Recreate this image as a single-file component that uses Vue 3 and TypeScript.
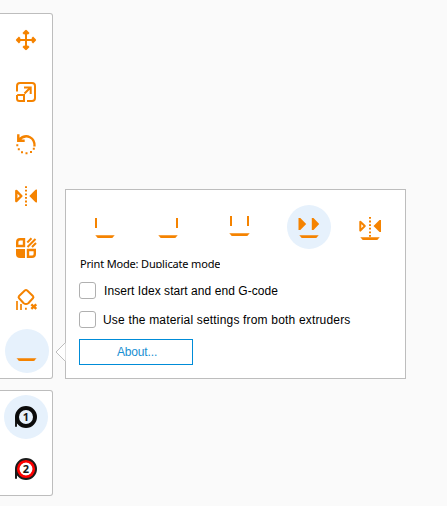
<script setup lang="ts">
import { ref } from 'vue'

const selectedTool = ref('idex')
const selectedExtruder = ref(1)
const selectedMode = ref('duplicate')
const insertGcode = ref(false)
const bothMaterials = ref(false)

const tools = ['move', 'scale', 'rotate', 'mirror', 'settings', 'support', 'idex']
const modes = ['left', 'right', 'dual', 'duplicate', 'mirror']
const extruders = [1, 2]
</script>

<template>
  <main class="viewport">
    <aside class="rail">
      <nav class="panel tools">
        <button v-for="tool in tools" :key="tool" class="cell" :class="[tool, { active: tool === selectedTool }]" @click="selectedTool = tool">
          <svg viewBox="0 0 44 44">
            <template v-if="tool === 'move'">
              <path class="line" d="M22 13.5V30.5M13.5 22H30.5" />
              <path class="line thick" stroke-linejoin="round" d="M19.3 15.8 22 13.1 24.7 15.8M19.3 28.2 22 30.9 24.7 28.2M15.8 19.3 13.1 22 15.8 24.7M28.2 19.3 30.9 22 28.2 24.7" />
            </template>
            <template v-else-if="tool === 'scale'">
              <path class="line" d="M13 21.5V16Q13 13 16 13H28Q31 13 31 16V28Q31 31 28 31H23" />
              <path class="line" d="M13.2 25H20V31H15.5Q13 31 13 28.5V25M20.5 23.5 26.5 17.5M20 17.5H26.7V24" />
            </template>
            <template v-else-if="tool === 'rotate'">
              <path class="line thick" d="M14.5 18.3C18 14.6 22 13.2 26 15.2C29.5 17 30.8 20.2 30.5 24.5" />
              <path class="line thick" d="M14.3 12.2V18.8H20.7" />
              <path class="fill" d="M13.5 14 20 19.5H13.5Z" />
              <path class="dot" d="M12.3 22.3h2v2h-2zM13.8 26.3h2v2h-2zM17 29.2h2v2h-2zM21.5 30.3h2v2h-2zM26 29h2v2h-2zM28.8 25.8h2v2h-2z" />
            </template>
            <template v-else-if="tool === 'mirror'">
              <path class="line thick" stroke-linejoin="round" d="M12.3 16.9 17.4 22 12.3 27.1Z" />
              <path class="fill" d="M33 15.5V28.5L31.5 28.2 25.3 22 31.5 15.8Z" />
              <path class="dash" d="M22 12.2V32" />
            </template>
            <template v-else-if="tool === 'settings'">
              <path class="line thick" d="M20 20V13.2H16Q13.2 13.2 13.2 16V20ZM24 24V30.8H28Q30.8 30.8 30.8 28V24Z" />
              <path class="fill" d="M12 23H21V32H16Q12 32 12 28Z" />
              <path class="line" d="M23.3 16.5 27.5 12.3M23.5 21 31.5 13M28 21 32 17" />
            </template>
            <template v-else-if="tool === 'support'">
              <path class="line" stroke-linejoin="round" d="M20.8 12.5Q22 11.5 23.2 12.5L28.9 17.9Q30 19.1 28.9 20.3L24.3 25.2Q22 26.8 19.7 25.2L15.1 20.3Q14 19.1 15.1 17.9Z" />
              <path class="line thin" d="M13 23V32M17 26V32" />
              <path class="dot" d="M21 29.7h1.8v2h-1.8z" />
              <path class="line thick" d="M27.3 26.3 32.3 30.9M32.3 26.3 27.3 30.9" />
            </template>
            <path v-else class="base" d="M11.3 29.3H31.8Q30.8 29.5 30.2 30.7 29.6 32 28.3 32H14.8Q13.5 32 12.9 30.7 12.3 29.5 11.3 29.3Z" />
          </svg>
        </button>
      </nav>
      <nav class="panel extruders">
        <button v-for="number in extruders" :key="number" class="cell" :class="{ active: number === selectedExtruder }" @click="selectedExtruder = number">
          <svg viewBox="0 0 44 44">
            <path d="M11 21V31.7H13V28.5H17Z" fill="#1b1b1b" />
            <circle cx="22" cy="22" r="9" :class="number === 1 ? 'rim-black' : 'rim-red'" />
            <circle v-if="number === 2" cx="22" cy="22" r="7.8" class="spool-red" />
            <text x="22" y="25.8" text-anchor="middle">{{ number }}</text>
          </svg>
        </button>
      </nav>
    </aside>

    <section class="popup">
      <svg class="pointer" viewBox="0 0 11 20"><path d="M10.5 0V.5L1 10L10.5 19.5V20" /></svg>
      <div class="modes">
        <button v-for="mode in modes" :key="mode" class="cell" :class="{ active: mode === selectedMode }" @click="selectedMode = mode">
          <svg viewBox="0 0 44 44">
            <path v-if="mode === 'left'" class="fill" d="M12 13H14V23H12Z" />
            <path v-else-if="mode === 'right'" class="fill" d="M30 13H32V23H30Z" />
            <path v-else-if="mode === 'dual'" class="fill" d="M13 11H15V21H13ZM30 11H32V21H30Z" />
            <path v-else-if="mode === 'duplicate'" class="fill" d="M11.5 13 13.3 13 19.2 19 13.3 25H11.5ZM24.8 13H26.5L32.2 19 26.5 25H24.8Z" />
            <template v-else>
              <path class="line" stroke-linejoin="round" d="M12.3 16.7 16.8 21 12.3 25.6Z" />
              <path class="fill" d="M33 15V27H31.5L25.5 21 31.5 15Z" />
              <path class="dash" d="M22 12V31.8" />
            </template>
            <path v-if="mode === 'dual'" class="base" d="M12 28.3H33Q32 28.5 31.4 29.7 30.8 31 29.5 31H15.5Q14.2 31 13.6 29.7 13 28.5 12 28.3Z" />
            <path v-else-if="mode === 'mirror'" class="base" d="M12 32.3H32Q31 32.5 30.4 33.7 29.8 35 28.5 35H15.5Q14.2 35 13.6 33.7 13 32.5 12 32.3Z" />
            <path v-else class="base" d="M12 30.3H32Q31 30.5 30.4 31.7 29.8 33 28.5 33H15.5Q14.2 33 13.6 31.7 13 30.5 12 30.3Z" />
          </svg>
        </button>
      </div>
      <h1>Print Mode: Duplicate mode</h1>
      <label class="gcode"><input v-model="insertGcode" type="checkbox"><span>Insert Idex start and end G-code</span></label>
      <label class="materials"><input v-model="bothMaterials" type="checkbox"><span>Use the material settings from both extruders</span></label>
      <button class="about">About...</button>
    </section>
  </main>
</template>

<style>
body {
  background: #fafafa;
}
</style>

<style scoped>
* {
  box-sizing: border-box;
}
.viewport {
  display: flex;
  align-items: flex-start;
  width: 447px;
  height: 506px;
  overflow: hidden;
  background: #fafafa;
  font-family: "Liberation Sans", Arial, sans-serif;
}
button {
  margin: 0;
  padding: 0;
  border: 0;
  background: transparent;
}
.rail {
  width: 53px;
  padding-top: 13px;
}
.panel {
  display: flex;
  flex-direction: column;
  gap: 8px;
  padding: 4px;
  background: #fff;
  border: 1px solid #bdbdbd;
  border-left: 0;
  border-radius: 0 3px 3px 0;
}
.tools {
  height: 366px;
}
.extruders {
  height: 106px;
  margin-top: 11px;
}
.cell {
  display: block;
  flex: none;
  width: 44px;
  height: 44px;
  border-radius: 50%;
}
.cell.active {
  background: #e6f1fc;
}
.cell.idex {
  margin: -1px 0 0 1px;
}
svg {
  display: block;
  width: 44px;
  height: 44px;
}
.fill,
.base,
.dot {
  fill: #f58300;
}
.line {
  fill: none;
  stroke: #f58300;
  stroke-width: 2;
}
.line.thick {
  stroke-width: 2.4;
}
.line.thin {
  stroke-width: 1.7;
}
.dash {
  fill: none;
  stroke: #f58300;
  stroke-width: 2;
  stroke-dasharray: 1.8 1.8;
}
text {
  font: bold 11px "Noto Sans", sans-serif;
  fill: #171717;
}
.rim-black {
  fill: #e6f1fc;
  stroke: #0b0b0b;
  stroke-width: 4;
}
.rim-red {
  fill: #fff;
  stroke: #1b1b1b;
  stroke-width: 4;
}
.spool-red {
  fill: none;
  stroke: #f00;
  stroke-width: 2.6;
}
.popup {
  position: relative;
  display: flex;
  flex-direction: column;
  align-items: flex-start;
  width: 341px;
  height: 190px;
  margin: 189px 0 0 12px;
  padding: 15px 13px 0;
  background: #fff;
  border: 1px solid #bdbdbd;
}
.pointer {
  position: absolute;
  left: -11px;
  top: 152px;
  width: 11px;
  height: 20px;
}
.pointer path {
  fill: #fff;
  stroke: #bdbdbd;
}
.modes {
  display: grid;
  flex: none;
  grid-template-columns: 63px 71px 70px 61px 44px;
  padding-left: 4px;
}
h1 {
  flex: none;
  height: 12px;
  margin: 7px 0 0 1px;
  overflow: hidden;
  font: 400 11px/16px "Noto Sans", sans-serif;
  letter-spacing: -0.17px;
  white-space: nowrap;
  color: #000;
}
label {
  display: flex;
  flex: none;
  align-items: center;
  height: 17px;
  font-size: 12px;
  white-space: nowrap;
  color: #000;
}
label span {
  padding-top: 1px;
}
.gcode {
  gap: 8px;
  margin-top: 14px;
  letter-spacing: 0.06px;
}
.materials {
  gap: 7px;
  margin-top: 12px;
  letter-spacing: 0.18px;
}
input {
  appearance: none;
  width: 17px;
  height: 17px;
  margin: 0;
  background: #fff;
  border: 1px solid #b0b0b0;
  border-radius: 3px;
}
.about {
  flex: none;
  width: 114px;
  height: 26px;
  margin-top: 11px;
  padding-left: 2px;
  border: 1px solid #008cd8;
  font: 12px "Liberation Sans", Arial, sans-serif;
  letter-spacing: -0.15px;
  color: #188fd2;
}
</style>
